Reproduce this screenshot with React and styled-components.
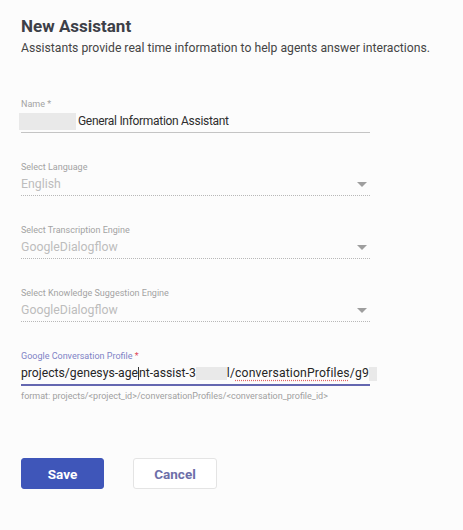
import styled, { createGlobalStyle } from 'styled-components';

const GlobalStyle = createGlobalStyle`
    body {
        margin: 0;
        background: #fcfcfc;
        font-family: Roboto, "Liberation Sans", sans-serif;
    }
`

const Page = styled.div`
    display: flex;
    flex-direction: column;
    padding: 16px 21px 0 21px;
`

const Title = styled.h1`
    margin: 0;
    font-size: 17px;
    line-height: 20px;
    font-weight: 700;
    color: #3d4048;
`

const Subtitle = styled.p`
    margin: 4px 0 0 0;
    font-size: 12.2px;
    line-height: 16px;
    color: #454545;
`

const Form = styled.div`
    display: flex;
    flex-direction: column;
    gap: 29px;
    width: 349px;
    margin-top: 43px;
`

const Field = styled.div`
    display: flex;
    flex-direction: column;
`

const Label = styled.label`
    font-size: 9px;
    line-height: 11px;
    margin-bottom: 1px;
    color: ${(props) => props.$color || '#a3a3a3'};
    span {
        color: ${(props) => props.$starColor || 'inherit'};
    }
`

const Value = styled.div`
    display: flex;
    align-items: center;
    justify-content: space-between;
    height: 21px;
    line-height: 21px;
    font-size: ${(props) => props.$size || '12.3px'};
    letter-spacing: ${(props) => props.$spacing || 'normal'};
    color: ${(props) => props.$color || '#2e2e2e'};
    white-space: nowrap;
    border-bottom: ${(props) => props.$line || '1px solid #c4c4c4'};
    padding-right: ${(props) => props.$padRight || '0'};
`

const Redacted = styled.span`
    display: inline-block;
    width: ${(props) => props.$w}px;
    height: ${(props) => props.$h || 16}px;
    margin-left: ${(props) => props.$ml || 0}px;
    margin-right: ${(props) => props.$mr || 0}px;
    background: #e9e9e9;
    vertical-align: middle;
`

const Caret = styled.span`
    display: inline-block;
    width: 1px;
    height: 13px;
    background: #333;
    vertical-align: middle;
`

const Tail = styled.span`
    letter-spacing: 0.15px;
`

const Misspelled = styled.span`
    text-decoration: underline dotted #e06060;
    text-underline-offset: 3px;
`

const Helper = styled.div`
    margin-top: 5px;
    font-size: 9px;
    line-height: 11px;
    color: #a0a0a0;
`

const Actions = styled.div`
    display: flex;
    gap: 29px;
    margin-top: 56px;
`

const Button = styled.button`
    width: ${(props) => props.$w}px;
    height: 31px;
    border-radius: 3px;
    font-family: Roboto, "Liberation Sans", sans-serif;
    font-size: 13.5px;
    font-weight: 700;
    cursor: pointer;
    background: ${(props) => (props.$primary ? '#3f56b9' : '#ffffff')};
    color: ${(props) => (props.$primary ? '#ffffff' : '#6d6fa9')};
    border: 1px solid ${(props) => (props.$primary ? '#3f56b9' : '#e4e4e4')};
`

function Arrow() {
    return (
        <svg width="10" height="5" viewBox="0 0 10 5">
            <path d="M0 0h10L5 5z" fill="#9e9e9e" />
        </svg>
    );
}

function SelectField({ label, value }) {
    return (
        <Field>
            <Label>{label}</Label>
            <Value $color="#bdbdbd" $line="1px dotted #b8b8b8" $padRight="3px">
                <span>{value}</span>
                <Arrow />
            </Value>
        </Field>
    );
}

export default function App() {
    return (
        <>
            <GlobalStyle />
            <Page>
                <Title>New Assistant</Title>
                <Subtitle>Assistants provide real time information to help agents answer interactions.</Subtitle>
                <Form>
                    <Field>
                        <Label>Name *</Label>
                        <Value $size="12px" $spacing="-0.3px">
                            <span>
                                <Redacted $w={57} $h={17} $ml={-2} $mr={2} />
                                General Information Assistant
                            </span>
                        </Value>
                    </Field>
                    <SelectField label="Select Language" value="English" />
                    <SelectField label="Select Transcription Engine" value="GoogleDialogflow" />
                    <SelectField label="Select Knowledge Suggestion Engine" value="GoogleDialogflow" />
                    <Field>
                        <Label $color="#7f83c6" $starColor="#e0485a">
                            Google Conversation Profile <span>*</span>
                        </Label>
                        <Value $size="12.2px" $color="#262626" $line="2px solid #6467b0">
                            <span>
                                projects/genesys-age<Caret />nt-assist-3
                                <Redacted $w={31} $h={13} />
                                <Tail>
                                    l/<Misspelled>conversationProfiles</Misspelled>/g9
                                </Tail>
                                <Redacted $w={8} $h={14} />
                            </span>
                        </Value>
                        <Helper>format: projects/&lt;project_id&gt;/conversationProfiles/&lt;conversation_profile_id&gt;</Helper>
                    </Field>
                </Form>
                <Actions>
                    <Button $primary $w={83}>Save</Button>
                    <Button $w={84}>Cancel</Button>
                </Actions>
            </Page>
        </>
    );
}
